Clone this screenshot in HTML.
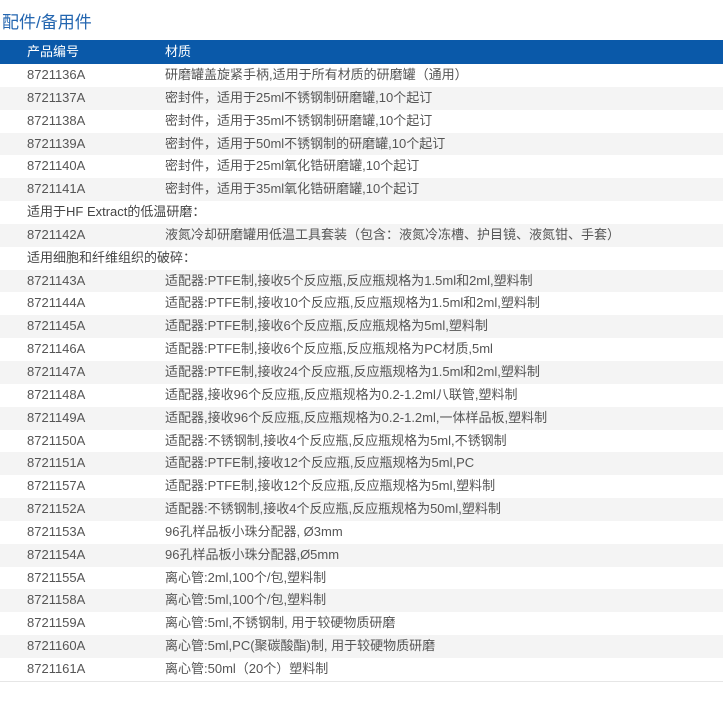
<!DOCTYPE html>
<html><head><meta charset="utf-8"><style>
body{margin:0;background:#fff;width:725px;height:714px;overflow:hidden;font-family:"Liberation Sans","Noto Sans CJK SC",sans-serif;}
h1{position:absolute;left:2px;top:8px;margin:0;font-size:17px;font-weight:normal;color:#2466b0;}
.t{position:absolute;left:0;top:40px;width:723px;}
.r{height:22.85px;line-height:22.85px;font-size:13px;color:#555;position:relative;white-space:nowrap;}
.r span{position:absolute;left:27px;}
.r b{position:absolute;left:165px;font-weight:normal;}
.h{height:24px;line-height:24px;background:#0a59a9;color:#fff;}
.g{background:#f4f4f4;}
.s span{color:#444;}
.end{border-top:1px solid #e6e6e6;}
</style></head><body>
<h1>配件/备用件</h1>
<div class="t">
<div class="r h"><span>产品编号</span><b>材质</b></div>
<div class="r"><span>8721136A</span><b>研磨罐盖旋紧手柄,适用于所有材质的研磨罐（通用）</b></div>
<div class="r g"><span>8721137A</span><b>密封件，适用于25ml不锈钢制研磨罐,10个起订</b></div>
<div class="r"><span>8721138A</span><b>密封件，适用于35ml不锈钢制研磨罐,10个起订</b></div>
<div class="r g"><span>8721139A</span><b>密封件，适用于50ml不锈钢制的研磨罐,10个起订</b></div>
<div class="r"><span>8721140A</span><b>密封件，适用于25ml氧化锆研磨罐,10个起订</b></div>
<div class="r g"><span>8721141A</span><b>密封件，适用于35ml氧化锆研磨罐,10个起订</b></div>
<div class="r s"><span>适用于HF Extract的低温研磨：</span></div>
<div class="r g"><span>8721142A</span><b>液氮冷却研磨罐用低温工具套装（包含：液氮冷冻槽、护目镜、液氮钳、手套）</b></div>
<div class="r s"><span>适用细胞和纤维组织的破碎：</span></div>
<div class="r g"><span>8721143A</span><b>适配器:PTFE制,接收5个反应瓶,反应瓶规格为1.5ml和2ml,塑料制</b></div>
<div class="r"><span>8721144A</span><b>适配器:PTFE制,接收10个反应瓶,反应瓶规格为1.5ml和2ml,塑料制</b></div>
<div class="r g"><span>8721145A</span><b>适配器:PTFE制,接收6个反应瓶,反应瓶规格为5ml,塑料制</b></div>
<div class="r"><span>8721146A</span><b>适配器:PTFE制,接收6个反应瓶,反应瓶规格为PC材质,5ml</b></div>
<div class="r g"><span>8721147A</span><b>适配器:PTFE制,接收24个反应瓶,反应瓶规格为1.5ml和2ml,塑料制</b></div>
<div class="r"><span>8721148A</span><b>适配器,接收96个反应瓶,反应瓶规格为0.2-1.2ml八联管,塑料制</b></div>
<div class="r g"><span>8721149A</span><b>适配器,接收96个反应瓶,反应瓶规格为0.2-1.2ml,一体样品板,塑料制</b></div>
<div class="r"><span>8721150A</span><b>适配器:不锈钢制,接收4个反应瓶,反应瓶规格为5ml,不锈钢制</b></div>
<div class="r g"><span>8721151A</span><b>适配器:PTFE制,接收12个反应瓶,反应瓶规格为5ml,PC</b></div>
<div class="r"><span>8721157A</span><b>适配器:PTFE制,接收12个反应瓶,反应瓶规格为5ml,塑料制</b></div>
<div class="r g"><span>8721152A</span><b>适配器:不锈钢制,接收4个反应瓶,反应瓶规格为50ml,塑料制</b></div>
<div class="r"><span>8721153A</span><b>96孔样品板小珠分配器, Ø3mm</b></div>
<div class="r g"><span>8721154A</span><b>96孔样品板小珠分配器,Ø5mm</b></div>
<div class="r"><span>8721155A</span><b>离心管:2ml,100个/包,塑料制</b></div>
<div class="r g"><span>8721158A</span><b>离心管:5ml,100个/包,塑料制</b></div>
<div class="r"><span>8721159A</span><b>离心管:5ml,不锈钢制, 用于较硬物质研磨</b></div>
<div class="r g"><span>8721160A</span><b>离心管:5ml,PC(聚碳酸酯)制, 用于较硬物质研磨</b></div>
<div class="r"><span>8721161A</span><b>离心管:50ml（20个）塑料制</b></div>
<div class="end"></div>
</div>
</body></html>
